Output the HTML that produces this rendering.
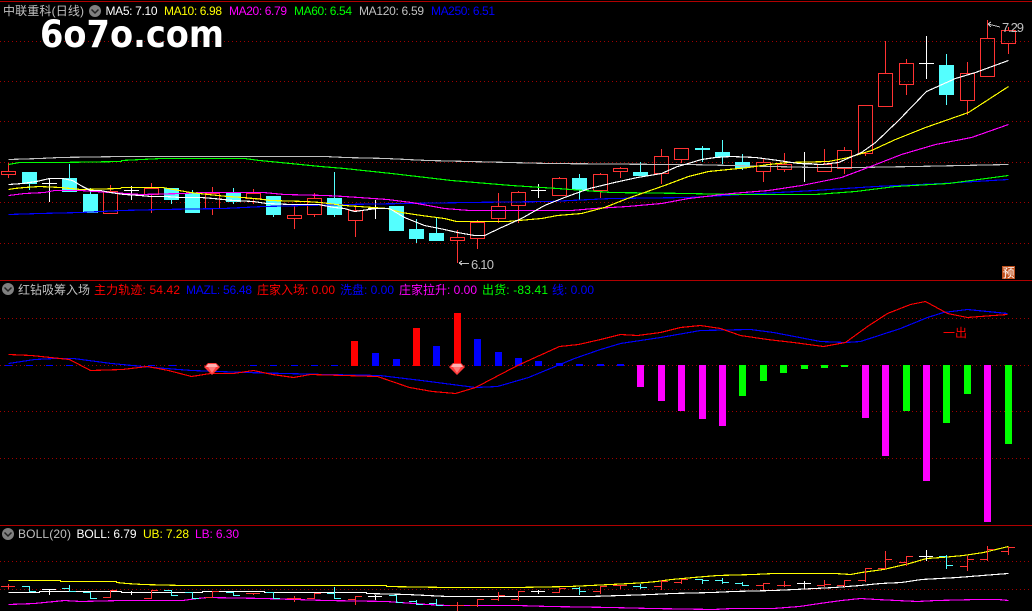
<!DOCTYPE html>
<html><head><meta charset="utf-8"><title>中联重科</title>
<style>
html,body{margin:0;padding:0;background:#000;width:1032px;height:611px;overflow:hidden}
svg{display:block;position:absolute;left:0;top:0}
text{font-family:"Liberation Sans","WenQuanYi Zen Hei","Noto Sans CJK SC",sans-serif;font-size:12px}
.d{position:absolute;left:0;width:1032px;height:1px;background:repeating-linear-gradient(90deg,#a00000 0,#a00000 1px,transparent 1px,transparent 4px)}
</style></head><body>
<div class="d" style="top:41px"></div><div class="d" style="top:81px"></div><div class="d" style="top:121px"></div><div class="d" style="top:162px"></div><div class="d" style="top:202px"></div><div class="d" style="top:243px"></div><div class="d" style="top:318px"></div><div class="d" style="top:365px"></div><div class="d" style="top:411px"></div><div class="d" style="top:458px"></div><div class="d" style="top:561px"></div><div class="d" style="top:589px"></div>
<svg width="1032" height="611" viewBox="0 0 1032 611" xmlns="http://www.w3.org/2000/svg">
<g shape-rendering="crispEdges" fill="none">
<path d="M0 1.5H1032M0 280.5H1032M0 525.5H1032" stroke="#b00000"/>

<!-- cyan candle bodies -->
<g fill="#54ffff" stroke="none">
<rect x="22" y="172" width="15" height="12"/><rect x="62" y="178" width="15" height="14"/><rect x="83" y="194" width="15" height="19"/><rect x="164" y="188" width="15" height="12"/><rect x="185" y="193" width="15" height="20"/><rect x="226" y="193" width="15" height="9"/><rect x="266" y="196" width="15" height="19"/><rect x="327" y="198" width="15" height="17"/><rect x="389" y="206" width="15" height="25"/><rect x="409" y="229" width="15" height="10"/><rect x="429" y="233" width="15" height="8"/><rect x="572" y="178" width="15" height="12"/><rect x="633" y="172" width="15" height="4"/><rect x="695" y="148" width="15" height="2"/><rect x="715" y="152" width="15" height="5"/><rect x="735" y="162" width="15" height="6"/><rect x="939" y="65" width="15" height="30"/>
</g>
<path stroke="#54ffff" d="M29.5 184V190M69.5 164V178M90.5 188V194M171.5 200V204M192.5 190V193M233.5 188V204M273.5 215V217M334.5 172V217M416.5 219V243M436.5 217V233M579.5 174V200M640.5 162V172M702.5 146V162M722.5 140V164M742.5 154V170M946.5 54V105"/>
<!-- red candles -->
<path stroke="#ff3232" d="M1.5 171.5h14v3h-14zM8.5 163v8M8.5 175v3
M103.5 191.5h14v22h-14zM110.5 185v6
M144.5 188.5h14v6h-14zM151.5 183v5M151.5 195v18
M205.5 193.5h14v15h-14zM212.5 187v6M212.5 209v6
M246.5 193.5h14v5h-14zM253.5 189v4M253.5 199v5
M287.5 215.5h14v3h-14zM294.5 205v10M294.5 219v10
M307.5 198.5h14v16h-14zM314.5 193v5M314.5 215v2
M348.5 210.5h14v10h-14zM355.5 207v3M355.5 221v16
M450.5 237.5h14v3h-14zM457.5 230v7M457.5 241v22
M470.5 222.5h14v16h-14zM477.5 220v2M477.5 239v10
M491.5 206.5h14v12h-14zM498.5 193v13M498.5 219v4
M511.5 192.5h14v13h-14zM518.5 191v1M518.5 206v17
M552.5 178.5h14v17h-14zM559.5 177v1
M593.5 174.5h14v16h-14zM600.5 173v1M600.5 191v7
M613.5 168.5h14v3h-14zM620.5 167v1M620.5 172v6
M654.5 156.5h14v17h-14zM661.5 149v7M661.5 174v10
M674.5 148.5h14v11h-14zM681.5 160v3
M756.5 162.5h14v9h-14zM763.5 159v3M763.5 172v10
M777.5 164.5h14v5h-14zM784.5 153v11M784.5 170v2
M817.5 164.5h14v7h-14zM824.5 149v15
M837.5 150.5h14v18h-14zM844.5 147v3M844.5 169v5
M858.5 105.5h14v48h-14zM865.5 154v2
M878.5 73.5h14v33h-14zM885.5 41v32
M899.5 63.5h14v21h-14zM906.5 59v4M906.5 85v10
M960.5 73.5h14v27h-14zM967.5 62v11M967.5 101v14
M980.5 38.5h14v38h-14zM987.5 20v18
M1001.5 30.5h14v13h-14zM1008.5 27v3M1008.5 44v10"/>
<!-- white crosses -->
<path stroke="#fff" d="M42 183.5h15M49.5 178V202M124 190.5h15M131.5 186V200M368 208.5h15M375.5 200V219M531 190.5h15M538.5 184V198M797 163.5h15M804.5 152V182M919 63.5h15M926.5 36V79"/>

<!-- MAs -->
<g transform="translate(.5 .5)" stroke-width="1.15">
<polyline stroke="#0000ff" points="8,214 39,213 80,212 121,210 161,209 223,208 263,206 305,205 344,204 467,202 549,201 611,198 688,197 814,190 875,186 941,183 1008,179"/>
<polyline stroke="#00ff00" points="8,164 19,162 59,162 121,161 121,160 141,159 161,158 244,158 259,160 290,163 320,166 344,168 391,173 451,180 511,185 557,188 611,192 688,193 731,194 815,194 855,191 895,186 948,183 1008,175"/>
<polyline stroke="#c0c0c0" points="8,159 39,158 59,157 121,156 325,156 344,157 386,158 427,160 509,162 549,163 667,164 688,164 815,167 855,167 915,166 1008,164"/>
<polyline stroke="#ff00ff" points="8,195 24,193 44,192 54,190 80,190 110,192 140,194 182,193 202,192 263,192 284,194 325,195 344,196 387,199 411,202 444,208 469,210 571,210 594,208 627,206 661,203 688,198 731,193 768,190 801,185 841,177 865,168 901,154 935,144 971,137 1008,124"/>
<polyline stroke="#ffff00" points="8,189 14,188 24,187 39,186 60,187 80,189 120,188 121,187 162,187 173,189 190,192 208,194 227,196 243,197 263,199 270,200 305,201 320,202 344,205 387,208 401,212 421,215 444,218 456,221 507,221 541,218 557,215 581,213 604,207 627,198 644,192 664,185 688,176 708,171 728,169 748,167 768,164 788,162 828,161 848,157 871,150 895,139 925,127 968,112 1008,86"/>
<polyline stroke="#ffffff" points="8,184 22,183 36,181 49,178 62,178 72,180 82,186 90,190 100,190 110,192 124,194 140,195 150,196 165,196 180,197 200,197 213,198 233,200 253,201 266,203 290,204 318,204 334,207 344,208 354,211 376,208 389,208 404,217 424,225 444,229 457,232 474,235 484,235 501,227 521,218 544,205 564,197 589,188 614,182 637,177 661,173 677,166 688,163 701,159 715,157 731,156 755,157 778,160 798,163 821,164 838,162 861,152 875,142 898,120 926,91 955,78 975,72 1008,60"/>
</g>

<!-- annotation arrows -->
<path stroke="#c0c0c0" d="M459 263.5H469M459 263l3-2M459 263l3 2M988 24l12 3M988 24l3-2M988 24l3 3"/>

<!-- indicator bars -->
<g fill="#ff0000" stroke="none">
<rect x="351" y="341" width="7" height="25"/><rect x="413" y="328" width="7" height="38"/><rect x="454" y="313" width="7" height="53"/>
</g>
<g fill="#0000ff" stroke="none">
<rect x="372" y="353" width="7" height="13"/><rect x="393" y="359" width="7" height="7"/><rect x="433" y="346" width="7" height="20"/><rect x="474" y="339" width="7" height="27"/><rect x="495" y="352" width="7" height="14"/><rect x="515" y="358" width="7" height="8"/><rect x="535" y="361" width="7" height="5"/><rect x="556" y="363" width="7" height="3"/><rect x="576" y="364" width="7" height="2"/><rect x="597" y="364" width="7" height="2"/><rect x="617" y="364" width="7" height="2"/>
<rect x="5" y="365" width="7" height="1"/><rect x="26" y="365" width="7" height="1"/><rect x="46" y="365" width="7" height="1"/><rect x="66" y="365" width="7" height="1"/><rect x="128" y="365" width="7" height="1"/><rect x="148" y="365" width="7" height="1"/><rect x="169" y="365" width="7" height="1"/><rect x="250" y="365" width="7" height="1"/><rect x="270" y="365" width="7" height="1"/><rect x="291" y="365" width="7" height="1"/><rect x="311" y="365" width="7" height="1"/><rect x="331" y="365" width="7" height="1"/>
</g>
<g fill="#ff00ff" stroke="none">
<rect x="637" y="365" width="7" height="22"/><rect x="658" y="365" width="7" height="36"/><rect x="678" y="365" width="7" height="46"/><rect x="699" y="365" width="7" height="54"/><rect x="719" y="365" width="7" height="61"/><rect x="862" y="365" width="7" height="53"/><rect x="882" y="365" width="7" height="91"/><rect x="923" y="365" width="7" height="116"/><rect x="984" y="365" width="7" height="157"/>
</g>
<g fill="#00ff00" stroke="none">
<rect x="739" y="365" width="7" height="31"/><rect x="760" y="365" width="7" height="16"/><rect x="780" y="365" width="7" height="8"/><rect x="801" y="365" width="7" height="4"/><rect x="821" y="365" width="7" height="3"/><rect x="841" y="365" width="7" height="2"/><rect x="903" y="365" width="7" height="46"/><rect x="943" y="365" width="7" height="58"/><rect x="964" y="365" width="7" height="29"/><rect x="1005" y="365" width="7" height="79"/>
</g>
<g transform="translate(.5 .5)" stroke-width="1.15">
<polyline stroke="#0000ff" points="8,363 34,359 54,358 73,358 111,363 153,367 191,370 245,372 325,374 379,375 421,380 475,387 497,386 528,377 574,358 600,349 620,343 660,337 700,330 750,329 773,332 820,341 845,342 860,341 900,328 927,317 943,312 967,309 1007,313"/>
<polyline stroke="#ff0000" points="8,354 31,355 50,357 69,359 90,370 122,369 147,366 168,370 191,376 210,373 233,373 253,370 272,374 293,377 310,374 344,375 377,376 409,387 432,391 455,393 475,387 517,365 559,346 578,344 600,339 620,334 637,335 660,332 680,327 700,325 720,328 740,335 767,339 793,342 823,346 845,342 867,326 887,313 910,304 925,301 947,313 967,317 993,315 1007,314"/>

<!-- boll lines -->
<polyline stroke="#ffff00" points="8,580 60,580 60,581 116,581 116,582 126,583 142,584 182,585 386,585 386,586 447,587 516,587 569,586 590,585 610,584 630,583 646,582 656,581 671,579 693,577 717,575 753,574 773,573 835,573 850,574 861,572 883,569 909,563 926,558 941,557 963,555 983,552 1008,546"/>
<polyline stroke="#ffffff" points="8,592 39,592 39,591 121,591 121,592 202,592 202,591 264,591 264,592 366,592 366,593 407,594 427,595 447,596 590,596 651,594 671,593 712,592 732,591 773,590 794,589 814,588 834,587 860,585 880,583 901,582 921,579 957,577 982,575 1008,573"/>
<polyline stroke="#ff00ff" points="8,604 34,603 54,601 64,600 80,601 121,600 182,600 197,598 207,597 264,598 325,600 386,601 427,604 447,605 516,605 549,606 611,607 651,608 713,609 732,608 773,608 799,606 819,603 841,600 860,598 876,599 917,601 936,600 977,599 998,599 1008,600"/>
</g>
<!-- boll ticks -->
<path stroke="#ff3232" d="M1 586.5h14M8.5 584v5
M103 597.5h7M110.5 590v8M110 590.5h7
M144 598.5h7M151.5 590v9M151 590.5h7
M205 597.5h7M212.5 591v7M212 591.5h7
M246 593.5h14M253.5 593v2
M287 598.5h14M294.5 596v6
M307 598.5h7M314.5 593v6M314 593.5h7
M348 599.5h7M355.5 596v9M355 596.5h7
M450 605.5h14M457.5 602v9
M470 605.5h7M477.5 599v8M477 599.5h7
M491 599.5h7M498.5 592v9M498 595.5h7
M511 599.5h7M518.5 591v10M518 591.5h7
M552 592.5h7M559.5 588v5M559 588.5h7
M593 591.5h7M600.5 586v8M600 586.5h7
M613 585.5h14M620.5 585v4
M654 586.5h7M661.5 580v10M661 581.5h7
M674 582.5h7M681.5 579v5M681 579.5h7
M756 585.5h7M763.5 583v7M763 583.5h7
M777 585.5h14M784.5 581v6
M817 585.5h7M824.5 580v7M824 584.5h7
M837 585.5h7M844.5 580v7M844 580.5h7
M858 580.5h7M865.5 568v14M865 568.5h7
M878 568.5h7M885.5 551v18M885 559.5h7
M899 562.5h7M906.5 556v10M906 556.5h7
M960 566.5h7M967.5 556v15M967 559.5h7
M980 559.5h7M987.5 546v15M987 549.5h7
M1001 551.5h7M1008.5 547v8M1008 547.5h7"/>
<path stroke="#54ffff" d="M22 586.5h7M29.5 586v5M29 591.5h7
M62 588.5h7M69.5 585v6M69 591.5h7
M83 592.5h7M90.5 592v6M90 598.5h7
M164 590.5h7M171.5 590v5M171 595.5h7
M185 592.5h7M192.5 592v6M192 598.5h7
M226 592.5h7M233.5 592v3M233 595.5h7
M266 592.5h7M273.5 592v6M273 598.5h7
M327 593.5h7M334.5 587v11M334 598.5h7
M389 595.5h7M396.5 595v7M396 602.5h7
M409 601.5h7M416.5 600v5M416 604.5h7
M429 603.5h7M436.5 599v7M436 605.5h7
M572 588.5h7M579.5 587v8M579 591.5h7
M633 586.5h7M640.5 584v5M640 587.5h7
M695 579.5h7M702.5 579v5M702 580.5h7
M715 580.5h7M722.5 578v6M722 582.5h7
M735 583.5h7M742.5 582v3M742 585.5h7
M939 556.5h7M946.5 555v14M946 565.5h7"/>
<path stroke="#fff" d="M42 589.5h14M49.5 589v6M124 592.5h14M131.5 591v4M368 596.5h14M375.5 595v5M531 591.5h14M538.5 590v4M797 583.5h14M804.5 581v8M919 556.5h14M926.5 550v11"/>
</g>

<!-- diamonds -->
<g>
<polygon points="208,363 216,363 220,367 212,375 204,367" fill="#ff3a3a"/>
<polygon points="208,364 216,364 218,367 206,367" fill="#ffb0b0"/>
<polygon points="208,367 216,367 212,373" fill="#ff7a7a"/>
<polygon points="453,363 461,363 465,367 457,375 449,367" fill="#ff3a3a"/>
<polygon points="453,364 461,364 463,367 451,367" fill="#ffb0b0"/>
<polygon points="453,367 461,367 457,373" fill="#ff7a7a"/>
</g>

<!-- 预 icon -->
<rect x="1002" y="266" width="13" height="13" fill="#c0501c"/>
<text x="1002.5" y="277" fill="#fff">预</text>

<!-- logo -->
<text x="40" y="47" fill="#fff" textLength="184" lengthAdjust="spacingAndGlyphs" style="font-family:'DejaVu Sans',sans-serif;font-size:37px;font-weight:bold">6o7o.com</text>

<!-- header 1 -->
<text x="3" y="15" fill="#c0c0c0" textLength="81">中联重科(日线)</text>
<circle cx="95" cy="11" r="6" fill="#808080"/><path d="M91.500 9.500L95 13L98.500 9.500" stroke="#222" stroke-width="1.500" fill="none"/>
<text x="105.500" y="15" fill="#fff" textLength="52">MA5: 7.10</text>
<text x="164" y="15" fill="#ffff00" textLength="58">MA10: 6.98</text>
<text x="229" y="15" fill="#ff00ff" textLength="58">MA20: 6.79</text>
<text x="294" y="15" fill="#00ff00" textLength="58">MA60: 6.54</text>
<text x="359" y="15" fill="#c0c0c0" textLength="65">MA120: 6.59</text>
<text x="431" y="15" fill="#0000ff" textLength="64">MA250: 6.51</text>

<!-- price labels -->
<text x="471" y="269" fill="#c0c0c0" textLength="23" style="font-size:13px">6.10</text>
<text x="1002" y="32" fill="#c0c0c0" textLength="22" style="font-size:13px">7.29</text>

<!-- header 2 -->
<circle cx="8" cy="289" r="6" fill="#808080"/><path d="M4.500 287.500L8 291L11.500 287.500" stroke="#222" stroke-width="1.500" fill="none"/>
<text x="18" y="294" fill="#c0c0c0" textLength="72">红钻吸筹入场</text>
<text x="94" y="294" fill="#ff0000" textLength="86">主力轨迹: 54.42</text>
<text x="186" y="294" fill="#0000ff" textLength="66">MAZL: 56.48</text>
<text x="257" y="294" fill="#ff0000" textLength="78">庄家入场: 0.00</text>
<text x="340" y="294" fill="#0000ff" textLength="54">洗盘: 0.00</text>
<text x="399" y="294" fill="#ff00ff" textLength="78">庄家拉升: 0.00</text>
<text x="482" y="294" fill="#00ff00" textLength="66">出货: -83.41</text>
<text x="552" y="294" fill="#0000ff" textLength="42">线: 0.00</text>
<text x="943" y="337" fill="#ff0000" textLength="24">一出</text>

<!-- header 3 -->
<circle cx="8" cy="534" r="6" fill="#808080"/><path d="M4.500 532.500L8 536L11.500 532.500" stroke="#222" stroke-width="1.500" fill="none"/>
<text x="18" y="538" fill="#c0c0c0" textLength="53">BOLL(20)</text>
<text x="76.500" y="538" fill="#fff" textLength="60">BOLL: 6.79</text>
<text x="143" y="538" fill="#ffff00" textLength="46">UB: 7.28</text>
<text x="195" y="538" fill="#ff00ff" textLength="44">LB: 6.30</text>
</svg>
</body></html>
